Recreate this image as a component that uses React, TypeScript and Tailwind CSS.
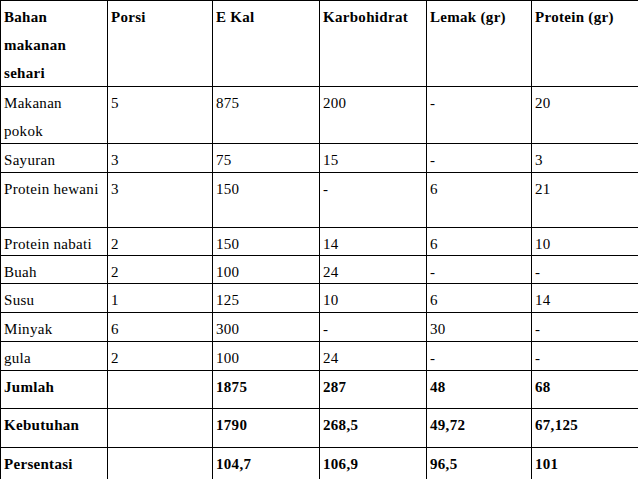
import React from "react";

type Row = { h: string; bold?: boolean; cells: string[] };

const rows: Row[] = [
  { h: "h-[86px]", bold: true, cells: ["Bahan\nmakanan\nsehari", "Porsi", "E Kal", "Karbohidrat", "Lemak (gr)", "Protein (gr)"] },
  { h: "h-[57px]", cells: ["Makanan\npokok", "5", "875", "200", "-", "20"] },
  { h: "h-[29px]", cells: ["Sayuran", "3", "75", "15", "-", "3"] },
  { h: "h-[55px]", cells: ["Protein hewani", "3", "150", "-", "6", "21"] },
  { h: "h-[28px]", cells: ["Protein nabati", "2", "150", "14", "6", "10"] },
  { h: "h-[28px]", cells: ["Buah", "2", "100", "24", "-", "-"] },
  { h: "h-[29px]", cells: ["Susu", "1", "125", "10", "6", "14"] },
  { h: "h-[29px]", cells: ["Minyak", "6", "300", "-", "30", "-"] },
  { h: "h-[29px]", cells: ["gula", "2", "100", "24", "-", "-"] },
  { h: "h-[38px]", bold: true, cells: ["Jumlah", "", "1875", "287", "48", "68"] },
  { h: "h-[39px]", bold: true, cells: ["Kebutuhan", "", "1790", "268,5", "49,72", "67,125"] },
  { h: "h-[33px]", bold: true, cells: ["Persentasi", "", "104,7", "106,9", "96,5", "101"] },
];

export default function App() {
  return (
    <div className="w-[638px] h-[479px] overflow-hidden bg-white text-black [font-family:'Liberation_Serif','Times_New_Roman',serif] text-[15px] leading-[28px] tracking-[0.3px]">
      <div className="grid grid-cols-[107px_105px_107px_107px_105px_107px]">
        {rows.map((r, i) =>
          r.cells.map((c, j) => (
            <div
              key={`${i}-${j}`}
              className={`${r.h} whitespace-pre-line overflow-hidden border-t border-l border-black pl-[3px] pr-[2px] pt-[2px] ${r.bold ? "font-bold" : ""}`}
            >
              {c}
            </div>
          ))
        )}
      </div>
    </div>
  );
}
